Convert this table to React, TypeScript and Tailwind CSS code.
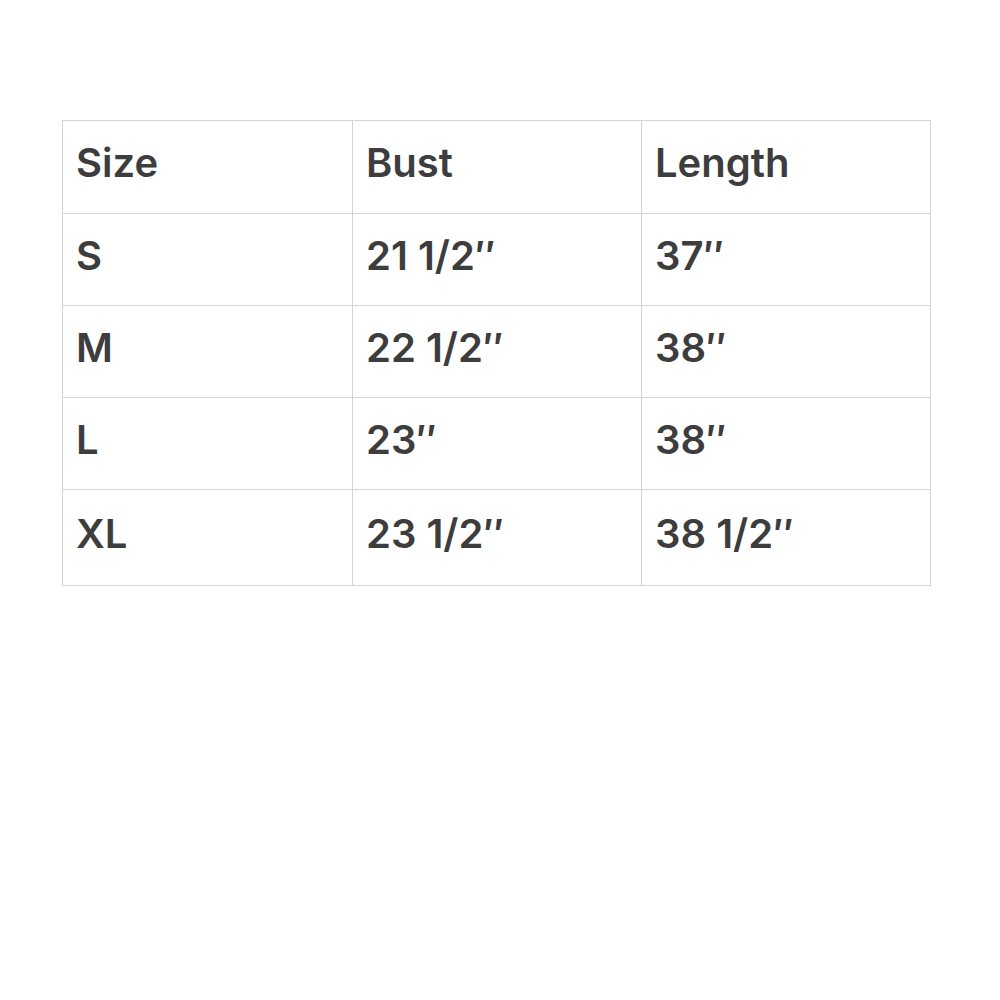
import React from "react";

const rows = [
  ["Size", "Bust", "Length"],
  ["S", "21 1/2″", "37″"],
  ["M", "22 1/2″", "38″"],
  ["L", "23″", "38″"],
  ["XL", "23 1/2″", "38 1/2″"],
];

export default function App() {
  return (
    <div className="w-[1000px] h-[1000px] bg-white pt-[120px] pl-[62px]" style={{ fontFamily: "Inter, 'Noto Sans', sans-serif" }}>
      <div className="w-[869px] border border-[#d4d4d4]">
        {rows.map((r, i) => (
          <div
            key={i}
            className={`grid grid-cols-[289px_289px_1fr] ${i > 0 ? "border-t border-[#d4d4d4]" : ""} ${i === rows.length - 1 ? "h-[96px]" : "h-[92px]"}`}
          >
            {r.map((c, j) => (
              <div
                key={j}
                className={`flex items-center pl-[13px] pb-[8px] text-[40px] font-semibold text-[#3d3d3d] ${j > 0 ? "border-l border-[#d4d4d4]" : ""}`}
              >
                {c}
              </div>
            ))}
          </div>
        ))}
      </div>
    </div>
  );
}
